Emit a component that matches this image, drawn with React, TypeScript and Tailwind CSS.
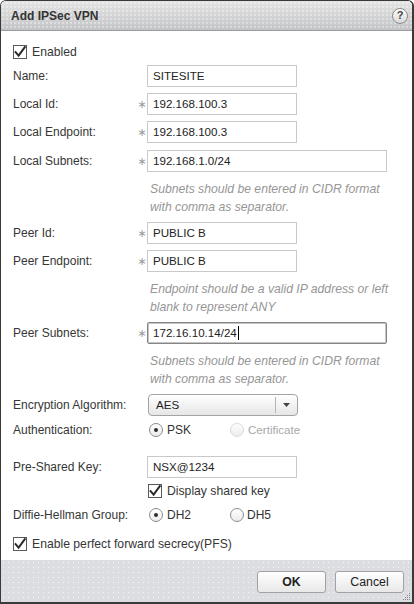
import React from "react";

const FONT = "font-['Liberation_Sans',Arial,sans-serif]";

function Check({ className = "" }: { className?: string }) {
  return (
    <span className={`relative inline-block h-[14px] w-[14px] shrink-0 border border-[#5a5a5a] bg-white ${className}`}>
      <svg viewBox="0 0 14 14" className="absolute -left-px -top-px h-[14px] w-[14px]">
        <path d="M2.6 7.2 L5.6 10.6 L11.8 2.2" fill="none" stroke="#2b2b2b" strokeWidth="2" strokeLinecap="square" />
      </svg>
    </span>
  );
}

function Radio({ on, disabled }: { on?: boolean; disabled?: boolean }) {
  return (
    <span
      className={`flex h-[14px] w-[14px] shrink-0 items-center justify-center rounded-full border bg-linear-to-b from-white to-[#ececec] ${
        disabled ? "border-[#dadada]" : "border-[#8c8c8c]"
      }`}
    >
      {on && <span className="h-[4px] w-[4px] rounded-full bg-[#2d2d2d]" />}
    </span>
  );
}

function Field({
  label,
  req,
  value,
  wide,
  focused,
  className = "",
}: {
  label: string;
  req?: boolean;
  value: string;
  wide?: boolean;
  focused?: boolean;
  className?: string;
}) {
  return (
    <div className={`flex h-[22px] items-center ${className}`}>
      <span className="w-[124px] text-[12px] text-[#363636]">{label}</span>
      <span className="w-[10px] pt-[2px] text-center text-[11px] text-[#9a9a9a] font-['DejaVu_Sans',sans-serif]">
        {req ? "∗" : ""}
      </span>
      <div
        className={`flex h-[22px] items-center px-[5px] text-[11.6px] text-[#222] ${wide ? "w-[240px]" : "w-[150px]"} ${
          focused
            ? "rounded-[2px] border border-[#858585] shadow-[inset_0_0_0_1px_#c4c4c4]"
            : "border border-[#c9c9c9]"
        }`}
      >
        {value}
        {focused && <span className="ml-px h-[14px] w-px bg-black" />}
      </div>
    </div>
  );
}

function Hint({ lines, className = "" }: { lines: string[]; className?: string }) {
  return (
    <div className={`pl-[137px] text-[12.2px] italic leading-[18px] text-[#969696] ${className}`}>
      {lines.map((l) => (
        <div key={l}>{l}</div>
      ))}
    </div>
  );
}

export default function App() {
  return (
    <div
      className={`flex h-[604px] w-[414px] flex-col overflow-hidden rounded-t-[6px] border-x border-t border-b-2 border-r-2 border-[#3a3a3a] bg-white ${FONT}`}
    >
      {/* title bar */}
      <div className="relative flex h-[30px] shrink-0 items-center justify-between border-b border-[#9c9c9c] bg-linear-to-b from-[#e4e4e4] to-[#c3c4c6] pl-[10px] pr-[4px]">
        <div className="pointer-events-none absolute inset-0 bg-[radial-gradient(circle,rgba(255,255,255,0.55)_0.6px,transparent_0.9px)] bg-[length:4px_4px]" />
        <span className="relative text-[12px] font-bold text-[#333]">Add IPSec VPN</span>
        <span className="relative flex h-[16px] w-[16px] items-center justify-center rounded-full border border-[#8c8c8c] bg-linear-to-b from-white to-[#d8d8d8] text-[11px] font-bold leading-none text-[#444]">
          ?
        </span>
      </div>

      {/* body */}
      <div className="flex-1 pl-[12px]">
        <div className="mt-[14px] flex h-[14px] items-center gap-[5px]">
          <Check />
          <span className="text-[12.2px] text-[#363636]">Enabled</span>
        </div>

        <Field className="mt-[6px]" label="Name:" value="SITESITE" />
        <Field className="mt-[6px]" label="Local Id:" req value="192.168.100.3" />
        <Field className="mt-[6px]" label="Local Endpoint:" req value="192.168.100.3" />
        <Field className="mt-[7px]" label="Local Subnets:" req value="192.168.1.0/24" wide />
        <Hint className="mt-[8px]" lines={["Subnets should be entered in CIDR format", "with comma as separator."]} />

        <Field className="mt-[6px]" label="Peer Id:" req value="PUBLIC B" />
        <Field className="mt-[6px]" label="Peer Endpoint:" req value="PUBLIC B" />
        <Hint className="mt-[8px]" lines={["Endpoint should be a valid IP address or left", "blank to represent ANY"]} />

        <Field className="mt-[6px]" label="Peer Subnets:" req value="172.16.10.14/24" wide focused />
        <Hint className="mt-[8px]" lines={["Subnets should be entered in CIDR format", "with comma as separator."]} />

        {/* encryption */}
        <div className="mt-[6px] flex h-[22px] items-center">
          <span className="w-[135px] text-[12px] text-[#363636]">Encryption Algorithm:</span>
          <div className="flex h-[22px] w-[150px] items-center rounded-[4px] border border-[#a3a3a3] bg-linear-to-b from-white to-[#e6e6e6]">
            <span className="flex-1 pl-[7px] text-[11.6px] text-[#222]">AES</span>
            <span className="flex h-[16px] w-[22px] items-center justify-center border-l border-[#b4b4b4]">
              <svg width="7" height="4" viewBox="0 0 7 4">
                <path d="M0 0 H7 L3.5 4 Z" fill="#444" />
              </svg>
            </span>
          </div>
        </div>

        <div className="mt-[4px] flex h-[20px] items-center">
          <span className="w-[136px] text-[12px] text-[#363636]">Authentication:</span>
          <div className="flex w-[81px] items-center gap-[4px]">
            <Radio on />
            <span className="text-[12px] text-[#333]">PSK</span>
          </div>
          <div className="flex items-center gap-[4px]">
            <Radio disabled />
            <span className="text-[11.6px] text-[#a8a8a8]">Certificate</span>
          </div>
        </div>

        <Field className="mt-[16px]" label="Pre-Shared Key:" value="NSX@1234" />

        <div className="mt-[6px] flex h-[14px] items-center gap-[5px] pl-[135px]">
          <Check />
          <span className="text-[12.2px] text-[#363636]">Display shared key</span>
        </div>

        <div className="mt-[10px] flex h-[14px] items-center">
          <span className="w-[136px] text-[12px] text-[#363636]">Diffie-Hellman Group:</span>
          <div className="flex w-[81px] items-center gap-[4px]">
            <Radio on />
            <span className="text-[12px] text-[#333]">DH2</span>
          </div>
          <div className="flex items-center gap-[3px]">
            <Radio />
            <span className="text-[12px] text-[#333]">DH5</span>
          </div>
        </div>

        <div className="mt-[15px] flex h-[14px] items-center gap-[5px]">
          <Check />
          <span className="text-[12.2px] text-[#363636]">Enable perfect forward secrecy(PFS)</span>
        </div>
      </div>

      {/* footer */}
      <div className="relative flex h-[42px] shrink-0 items-start justify-end gap-[9px] bg-[#dcdde1] bg-[radial-gradient(circle,rgba(255,255,255,0.75)_0.6px,transparent_0.9px)] bg-[length:5px_5px] pr-[8px] pt-[11px]">
        <button className="h-[22px] w-[69px] rounded-[3px] border border-[#a2a2a2] bg-linear-to-b from-white to-[#e8e8e8] text-[12.3px] font-bold text-[#222]">
          OK
        </button>
        <button className="h-[22px] w-[69px] rounded-[3px] border border-[#a2a2a2] bg-linear-to-b from-white to-[#e8e8e8] text-[12.3px] text-[#222]">
          Cancel
        </button>
        <svg className="absolute bottom-[1px] right-[1px]" width="8" height="8" viewBox="0 0 8 8">
          <rect x="6" y="0" width="1" height="1" fill="#888" />
          <rect x="4" y="2" width="1" height="1" fill="#888" />
          <rect x="6" y="2" width="1" height="1" fill="#888" />
          <rect x="2" y="4" width="1" height="1" fill="#888" />
          <rect x="4" y="4" width="1" height="1" fill="#888" />
          <rect x="6" y="4" width="1" height="1" fill="#888" />
          <rect x="0" y="6" width="1" height="1" fill="#888" />
          <rect x="2" y="6" width="1" height="1" fill="#888" />
          <rect x="4" y="6" width="1" height="1" fill="#888" />
          <rect x="6" y="6" width="1" height="1" fill="#888" />
        </svg>
      </div>
    </div>
  );
}
